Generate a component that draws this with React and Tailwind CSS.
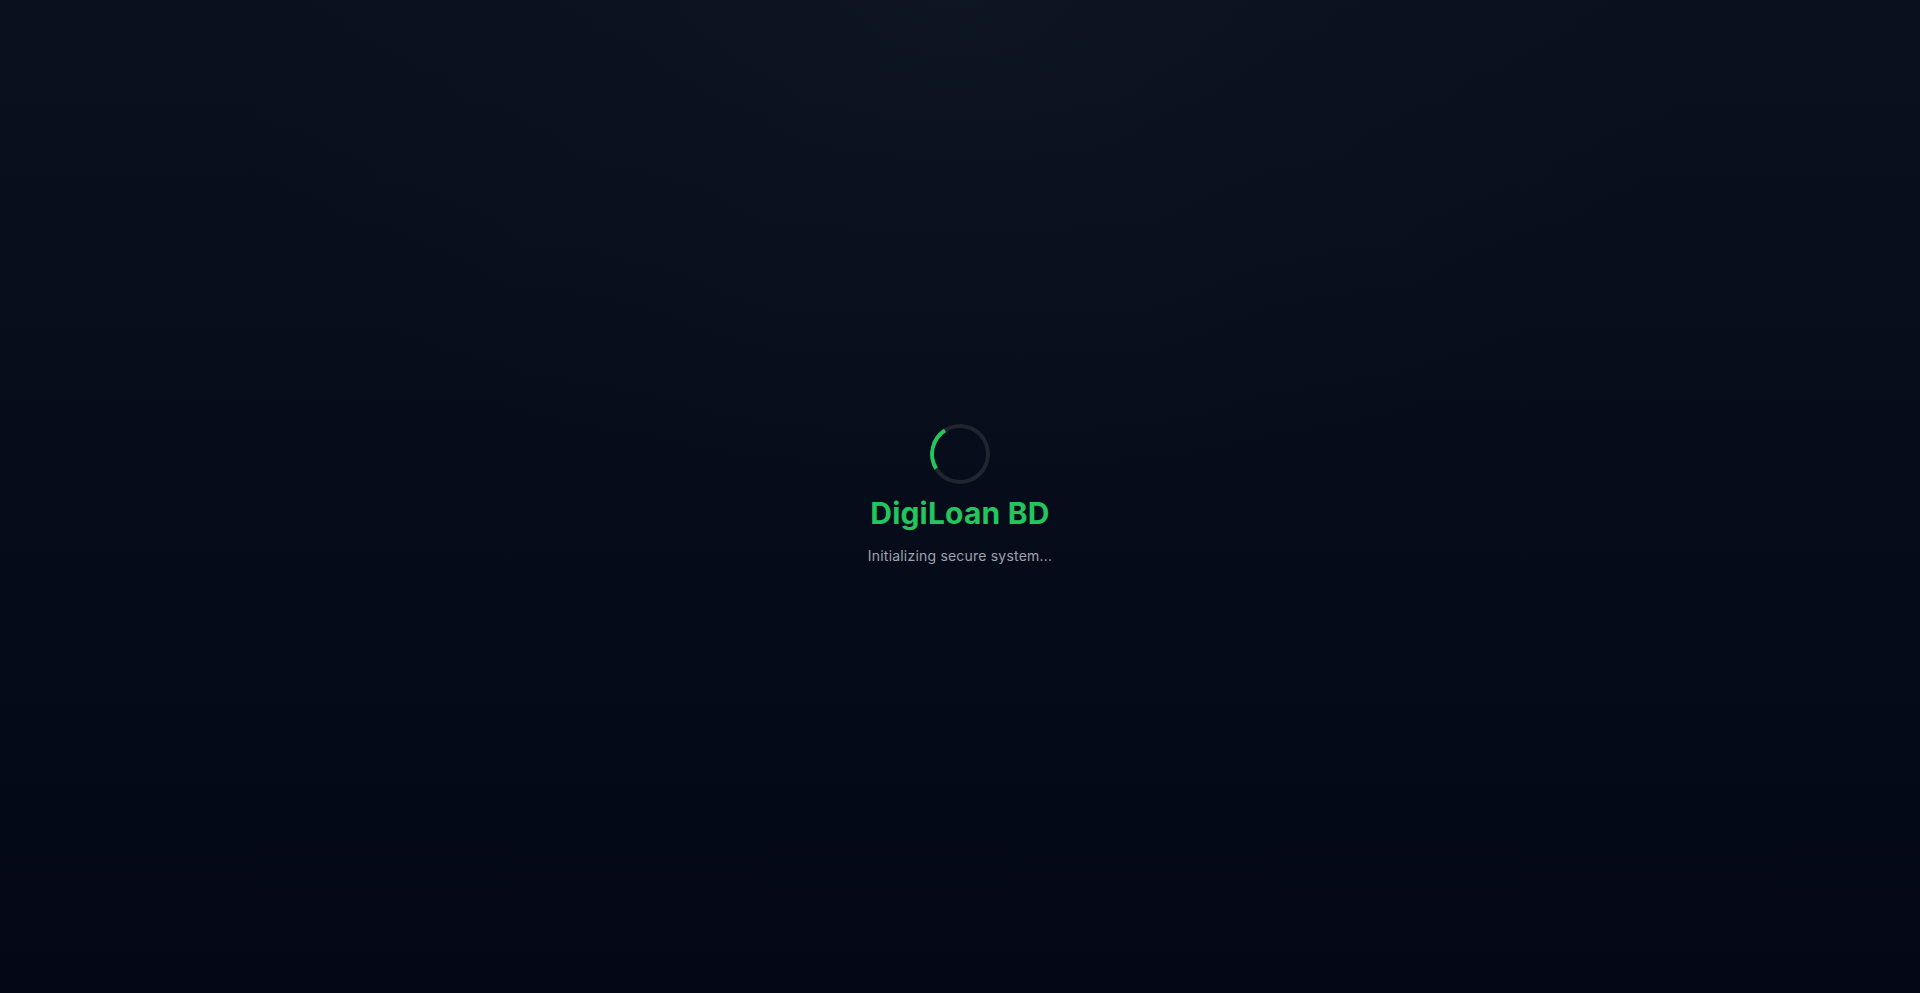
import React from "react";

const App = () => {
  return (
    <div className="relative min-h-screen w-full overflow-hidden bg-gradient-to-b from-[#0a101d] to-[#040816] font-['Inter','Noto_Sans',sans-serif]">
      {/* soft glow */}
      <div className="pointer-events-none absolute inset-0 bg-[radial-gradient(ellipse_55%_75%_at_50%_0%,rgba(30,41,59,0.18),transparent_70%)]" />

      <div className="relative flex min-h-screen flex-col items-center justify-center pb-1">
        <div className="h-[60px] w-[60px] -rotate-[77deg] rounded-full border-[4px] border-[#20252f] border-t-[#22c55e]" />
        <h1 className="mt-[11px] text-[30px] leading-9 font-bold tracking-[0.2px] text-[#22c55e]">
          DigiLoan BD
        </h1>
        <p className="mt-[15px] text-[14px] leading-5 tracking-[0.2px] text-[#9ca3af]">
          Initializing secure system...
        </p>
      </div>
    </div>
  );
};

export default App;
